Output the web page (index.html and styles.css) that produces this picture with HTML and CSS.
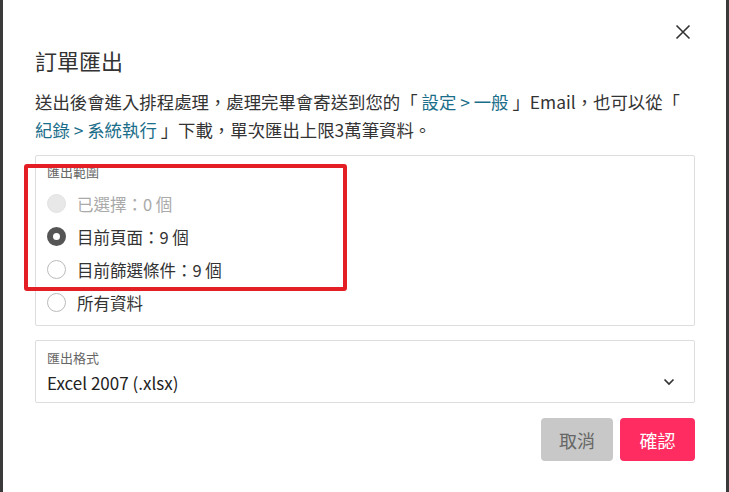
FILE: index.html
```html
<!DOCTYPE html>
<html lang="zh-Hant">
<head>
  <meta charset="UTF-8" />
  <meta name="viewport" content="width=device-width, initial-scale=1.0"/>
  <title>訂單匯出</title>
  <link rel="stylesheet" href="styles.css">
</head>
<body>
  <div class="modal">
    <div class="modal-top">
      <button class="close" aria-label="close">
        <svg width="16" height="16" viewBox="0 0 16 16">
          <path d="M1.5 1.5 L14.5 14.5 M14.5 1.5 L1.5 14.5" stroke="#333" stroke-width="1.6" fill="none"/>
        </svg>
      </button>
    </div>

    <h2 class="title">訂單匯出</h2>

    <p class="desc">
      送出後會進入排程處理，處理完畢會寄送到您的「 <a href="#">設定 &gt; 一般</a> 」Email，也可以從「<br>
      <a href="#">紀錄 &gt; 系統執行</a> 」下載，單次匯出上限3萬筆資料。
    </p>

    <!-- Range options -->
    <div class="box range">
      <div class="box-label">匯出範圍</div>
      <label class="radio disabled"><span class="dot"></span>已選擇：0 個</label>
      <label class="radio checked"><span class="dot"></span>目前頁面：9 個</label>
      <label class="radio"><span class="dot"></span>目前篩選條件：9 個</label>
      <label class="radio"><span class="dot"></span>所有資料</label>
      <div class="highlight"></div>
    </div>

    <!-- Format select -->
    <div class="box select">
      <div class="box-label">匯出格式</div>
      <div class="select-row">
        <span>Excel 2007 (.xlsx)</span>
        <svg width="12" height="8" viewBox="0 0 12 8">
          <path d="M1.5 1.5 L6 6 L10.5 1.5" stroke="#333" stroke-width="1.7" fill="none"/>
        </svg>
      </div>
    </div>

    <div class="button-row">
      <button class="btn cancel">取消</button>
      <button class="btn confirm">確認</button>
    </div>
  </div>
</body>
</html>
```

FILE: styles.css
```css
body {
  margin: 0;
  background-color: #3a3a3a;
  font-family: "Noto Sans CJK TC", "Noto Sans", sans-serif;
  color: #333;
}

.modal {
  margin: 0 3px;
  height: 492px;
  box-sizing: border-box;
  background: #fff;
  padding: 24px 31px 0 32px;
}

.modal-top {
  display: flex;
  justify-content: flex-end;
  height: 18px;
}

.close {
  border: none;
  background: none;
  padding: 0;
  margin-right: 4px;
  width: 16px;
  height: 16px;
  cursor: pointer;
}

.title {
  font-size: 22px;
  font-weight: normal;
  line-height: 28px;
  margin: 4px 0 0;
  color: #333;
}

.desc {
  font-size: 17.4px;
  line-height: 28px;
  margin: 14px 0 0;
  color: #333;
}

.desc a {
  color: #1b6e8a;
  text-decoration: none;
}

.box {
  border: 1px solid #ddd;
  border-radius: 2px;
}

.box-label {
  font-size: 13px;
  line-height: 18px;
  color: #666;
}

.range {
  position: relative;
  margin-top: 11px;
  padding: 7px 12px 6px 11px;
}

.range .box-label {
  margin-bottom: 6px;
}

.radio {
  display: flex;
  align-items: center;
  gap: 11px;
  height: 33px;
  font-size: 16.5px;
  color: #333;
}

.dot {
  width: 19px;
  height: 19px;
  box-sizing: border-box;
  border-radius: 50%;
  border: 1px solid #bbb;
  background: #fff;
}

.radio.checked .dot {
  border: 6px solid #555;
}

.radio.disabled {
  color: #aaa;
}

.radio.disabled .dot {
  background: #e8e8e8;
  border-color: #e2e2e2;
}

/* Red annotation frame */
.highlight {
  position: absolute;
  left: -12px;
  top: 8px;
  width: 323px;
  height: 127px;
  box-sizing: border-box;
  border: 4px solid #e31e24;
  border-radius: 3px;
}

.select {
  margin-top: 14px;
  padding: 8px 19px 8px 11px;
}

.select-row {
  display: flex;
  justify-content: space-between;
  align-items: center;
  margin-top: 3px;
  height: 24px;
  font-size: 17px;
  color: #222;
}

.button-row {
  display: flex;
  justify-content: flex-end;
  gap: 7px;
  margin-top: 15px;
}

.btn {
  height: 43px;
  border: none;
  border-radius: 4px;
  font-family: inherit;
  font-size: 18px;
  cursor: pointer;
}

.cancel {
  width: 72px;
  background: #c8c8c8;
  color: #666;
}

.confirm {
  width: 75px;
  background: #fe2c60;
  color: #fff;
}
```
